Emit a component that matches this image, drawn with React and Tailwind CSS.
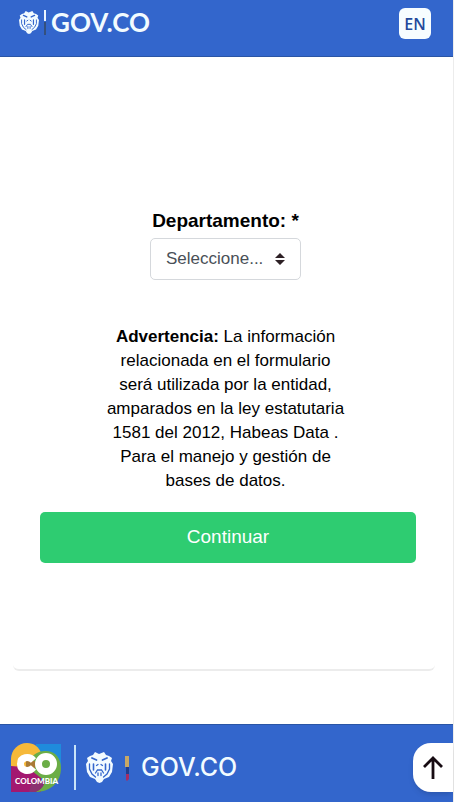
import React from "react";

function Crest({ className }) {
  return (
    <svg viewBox="0 0 27 31" className={className} aria-hidden="true">
      <path d="M1 6 4 4 7 3 9 0 13 2 18 0 20 3 23 4 26 6 25 9 27 12 26 20 23 25 18 27 16 30 13.500 31 11 30 9 27 4 25 1 20 0 12 2 9Z" fill="#f2fbff" />
      <g fill="none" stroke="#3366cc" strokeLinecap="round">
        <path d="M6 6 10.500 8M21 6 16.500 8" strokeWidth="1.800" />
        <path d="M3.500 12 3.500 17 6 22 9.500 25M23.500 12 23.500 17 21 22 17.500 25" strokeWidth="1.300" />
        <path d="M7.500 12 7.500 18M19.500 12 19.500 18" strokeWidth="1.600" />
        <path d="M10.500 13.500 12 12.500M16.500 13.500 15 12.500" strokeWidth="1.300" />
        <path d="M9.500 21 11.500 18h4l2 3M12 21v2.500M15 21v2.500" strokeWidth="1.300" />
      </g>
    </svg>
  );
}

function ColombiaLogo() {
  return (
    <svg viewBox="0 0 52 50" className="h-[50px] w-[52px] shrink-0" role="img" aria-label="CO Colombia">
      <path d="M26 1h25v22H26Z" fill="#1f8bdc" />
      <path d="M1 20h30v29H1Z" fill="#a31870" />
      <path d="M1 23V16C1 7 8 0 17 0c7 0 12 4 14 10l-5 15Z" fill="#f6b93a" />
      <path d="M22 14C26 9 31 8 36 8c9 0 15 7 15 17 0 14-10 24-26 24 5-2 9-6 10-11L22 28Z" fill="#6bad46" />
      <path d="M22 38h13c-1 5-4 9-10 11h-6Z" fill="#8b3270" />
      <path d="M16 18h9v7h-9Z" fill="#a97a35" />
      <path d="M23.500 17.500C19 12.500 10.500 14 10.500 21S19 29.500 23.500 24.500" fill="none" stroke="#fff" strokeWidth="7" />
      <ellipse cx="36" cy="21" rx="7.500" ry="7.500" fill="#6bad46" stroke="#fff" strokeWidth="7" />
      <text x="5" y="41" fontFamily="Lato, sans-serif" fontSize="8" fontWeight="900" fill="#fff">COLOMBIA</text>
    </svg>
  );
}

function Header() {
  return (
    <header className="flex h-[57px] items-start justify-between border-b border-[#2a55a5] bg-[#3366cc] pr-[22px] pl-[19px] pt-2">
      <a href="#inicio" className="flex items-center text-[#f2fbff]">
        <Crest className="h-[23px] w-5" />
        <svg viewBox="0 0 4 27" className="mx-1 h-[27px] w-1" aria-hidden="true">
          <path d="M1 1h2v11H1Z" fill="#eaf4ff" />
          <path d="M1 13h2v13H1Z" fill="#34507e" />
        </svg>
        <span className="font-[Lato,sans-serif] text-[26px] leading-7 font-bold">GOV.CO</span>
      </a>
      <button
        type="button"
        className="h-[31px] w-8 rounded-md bg-[#f7fdff] font-['Open_Sans',sans-serif] text-base leading-none font-semibold text-[#24499c]"
      >
        EN
      </button>
    </header>
  );
}

function DepartmentField() {
  return (
    <div className="flex flex-col items-center">
      <label htmlFor="departamento" className="text-[19px] leading-7 font-bold">
        Departamento: *
      </label>
      <div className="relative mt-[3px]">
        <select
          id="departamento"
          className="block h-[42px] w-[151px] appearance-none rounded-[5px] border border-[#d5d8dc] bg-white pl-[15px] text-[17px] text-[#495057]"
        >
          <option>Seleccione...</option>
        </select>
        <svg viewBox="0 0 10 12" className="pointer-events-none absolute top-[15px] right-4 h-3 w-[10px]" aria-hidden="true">
          <path d="M0 5 5 0l5 5ZM0 7h10l-5 5Z" fill="#2d2025" />
        </svg>
      </div>
    </div>
  );
}

function Footer() {
  return (
    <footer className="flex h-[78px] items-center justify-between border-t border-[#2a55a5] bg-[#3366cc] pt-2 pl-[10px]">
      <div className="flex items-center">
        <ColombiaLogo />
        <div className="ml-3 h-[45px] w-[2px] bg-[#c9e4f8]" />
        <Crest className="ml-[10px] h-[31px] w-[27px]" />
        <svg viewBox="0 0 4 26" className="ml-3 h-[26px] w-1" aria-hidden="true">
          <path d="M0 1h4v11H0Z" fill="#c7a866" />
          <path d="M1 12h3v7H1Z" fill="#203f91" />
          <path d="M1 19h3v5l-2 2-1-1Z" fill="#a52d65" />
        </svg>
        <span className="ml-3 font-[Inter,sans-serif] text-[25px] font-medium text-[#f2fbff]">GOV.CO</span>
      </div>
      <button
        type="button"
        aria-label="Volver arriba"
        className="flex h-[49px] w-10 items-center justify-center rounded-l-[18px] bg-white shadow-md"
      >
        <svg viewBox="0 0 20 24" className="h-6 w-5" fill="none" stroke="#170b12" strokeWidth="2.800" aria-hidden="true">
          <path d="M10 23V2M1 11l9-9 9 9" />
        </svg>
      </button>
    </footer>
  );
}

export default function App() {
  return (
    <div className="flex min-h-screen flex-col border-r border-[#ececec] bg-white font-['Liberation_Sans',Arial,sans-serif] text-black">
      <Header />
      <main className="flex-1 pr-[18px] pl-[13px]">
        <form
          className="rounded-b-md border-b-2 border-[#ececec] pr-[19px] pl-[27px] pt-[150px] pb-[106px]"
          onSubmit={(event) => event.preventDefault()}
        >
          <div className="pr-[5px]">
            <DepartmentField />
            <p className="mx-auto mt-[45px] max-w-[240px] text-center text-[17px] leading-6">
              <strong>Advertencia:</strong> La información relacionada en el formulario será utilizada por la entidad,
              amparados en la ley estatutaria 1581 del 2012, Habeas Data . Para el manejo y gestión de bases de datos.
            </p>
          </div>
          <button type="submit" className="mt-[19px] h-[51px] w-full rounded-[5px] bg-[#2ecc71] text-[19px] text-white">
            Continuar
          </button>
        </form>
      </main>
      <Footer />
    </div>
  );
}
